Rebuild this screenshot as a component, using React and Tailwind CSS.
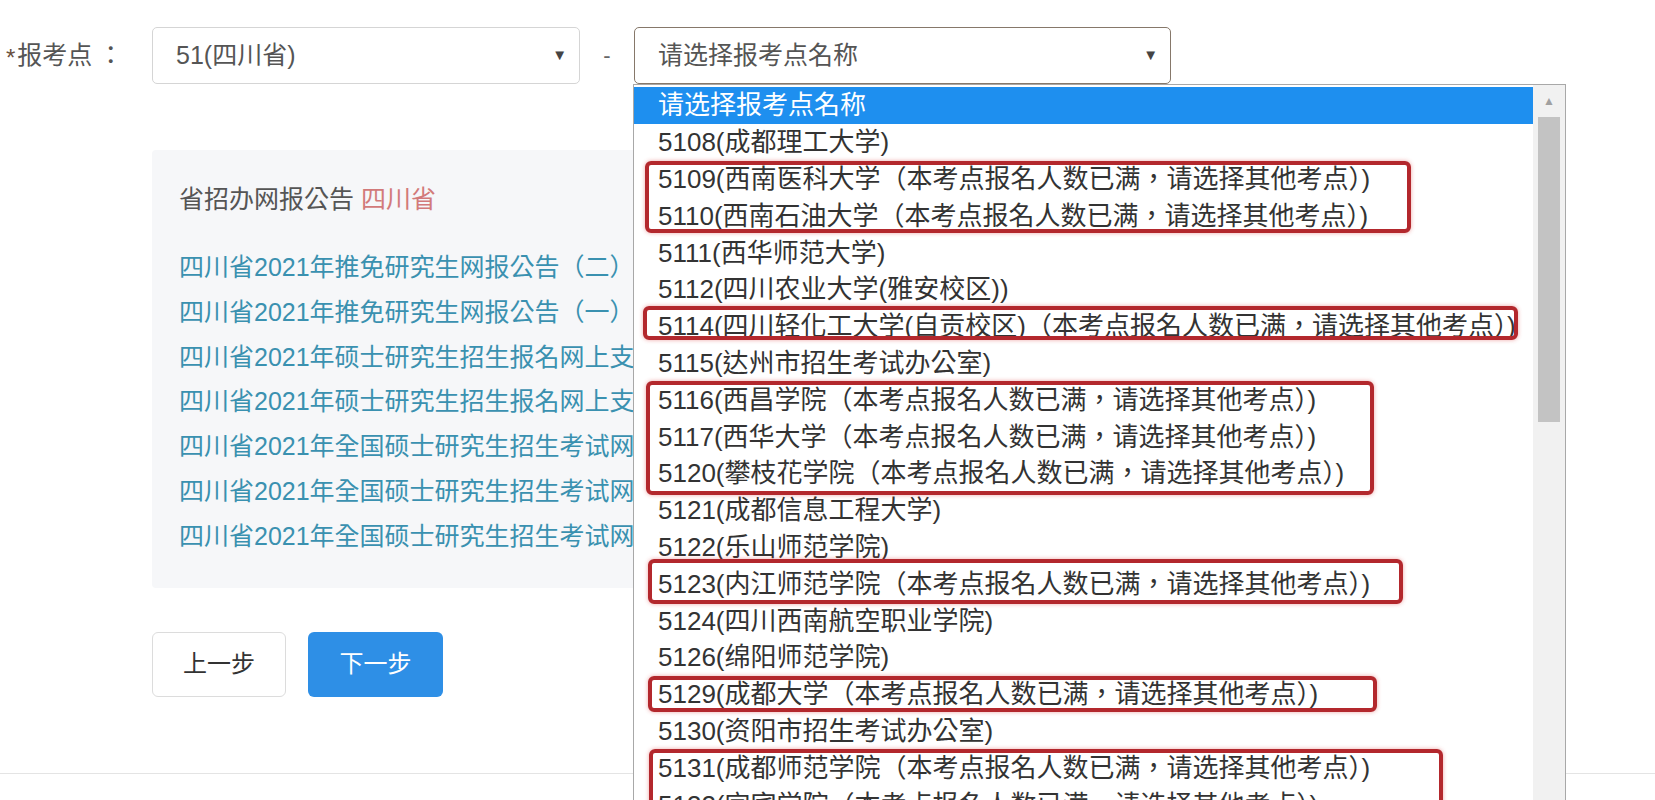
const FULL = "（本考点报名人数已满，请选择其他考点）";

const options = [
  "请选择报考点名称",
  "5108(成都理工大学)",
  `5109(西南医科大学${FULL})`,
  `5110(西南石油大学${FULL})`,
  "5111(西华师范大学)",
  "5112(四川农业大学(雅安校区))",
  `5114(四川轻化工大学(自贡校区)${FULL})`,
  "5115(达州市招生考试办公室)",
  `5116(西昌学院${FULL})`,
  `5117(西华大学${FULL})`,
  `5120(攀枝花学院${FULL})`,
  "5121(成都信息工程大学)",
  "5122(乐山师范学院)",
  `5123(内江师范学院${FULL})`,
  "5124(四川西南航空职业学院)",
  "5126(绵阳师范学院)",
  `5129(成都大学${FULL})`,
  "5130(资阳市招生考试办公室)",
  `5131(成都师范学院${FULL})`,
  `5132(宜宾学院${FULL})`,
];

const notices = [
  "四川省2021年推免研究生网报公告（二）",
  "四川省2021年推免研究生网报公告（一）",
  "四川省2021年硕士研究生招生报名网上支付公告（二）",
  "四川省2021年硕士研究生招生报名网上支付公告（一）",
  "四川省2021年全国硕士研究生招生考试网上报名公告（三）",
  "四川省2021年全国硕士研究生招生考试网上报名公告（二）",
  "四川省2021年全国硕士研究生招生考试网上报名公告（一）",
];

// red marks drawn over the list in the screenshot
const marks = [
  "left-[645px] top-[161px] w-[766px] h-[72px]",
  "left-[643px] top-[306px] w-[875px] h-[34px]",
  "left-[646px] top-[381px] w-[728px] h-[114px]",
  "left-[648px] top-[559px] w-[755px] h-[45px]",
  "left-[648px] top-[676px] w-[729px] h-[36px]",
  "left-[649px] top-[749px] w-[794px] h-[70px]",
];

function Select({ width, value, focused }) {
  return (
    <div
      className={`${width} h-[57px] flex items-center justify-between pl-[23px] pr-[12px] rounded-[5px] border bg-white text-[25px] text-[#555] ${
        focused ? "border-[#86786a]" : "border-[#d5d5d5]"
      }`}
    >
      <span>{value}</span>
      <span className="text-[15px] text-[#444]">▼</span>
    </div>
  );
}

export default function App() {
  return (
    <div
      className="relative w-[1655px] h-[800px] overflow-hidden bg-white"
      style={{ fontFamily: '"Liberation Sans", "Noto Sans CJK TC", "Noto Sans CJK SC", sans-serif' }}
    >
      <div className="pt-[27px]">
        <div className="flex items-center">
          <div className="w-[152px] pl-[6px] text-[25px] text-[#555] flex items-center">
            <span className="text-[24px] leading-none text-[#6a5040] mr-[2px] mt-[4px]">*</span>
            <span>报考点</span>
            <span className="ml-[6px]">：</span>
          </div>
          <Select width="w-[428px]" value="51(四川省)" />
          <div className="w-[54px] text-center text-[22px] text-[#666]">-</div>
          <Select width="w-[537px]" value="请选择报考点名称" focused />
        </div>

        <div className="ml-[152px] mt-[66px] w-[1000px] bg-[#f6f7f9] rounded-[4px] pt-[31px] pl-[27px] pb-[29px]">
          <div className="text-[25px] leading-[36px] text-[#555]">
            省招办网报公告 <span className="text-[#d27a7a]">四川省</span>
          </div>
          <div className="mt-[28px] flex flex-col">
            {notices.map((n) => (
              <a key={n} className="text-[25px] leading-[44.8px] text-[#3a91b0] whitespace-nowrap">
                {n}
              </a>
            ))}
          </div>
        </div>

        <div className="ml-[152px] mt-[44px] flex gap-[22px]">
          <button className="w-[134px] h-[65px] rounded-[6px] border border-[#dcdcdc] bg-white text-[24px] text-[#333]">
            上一步
          </button>
          <button className="w-[135px] h-[65px] rounded-[6px] bg-[#2e8fe6] text-[24px] text-white">
            下一步
          </button>
        </div>

        <div className="mt-[76px] h-px bg-[#e4e4e4]" />
      </div>

      {/* open dropdown list */}
      <div className="absolute left-[633px] top-[84px] w-[933px] h-[760px] z-10 flex border border-[#a8a8a8] bg-white">
        <div className="flex-1 overflow-hidden pt-[2px]">
          {options.map((o, i) => (
            <div
              key={o}
              className={`h-[36.8px] flex items-center pl-[24px] text-[26px] leading-[30px] whitespace-nowrap ${
                i === 0 ? "bg-[#1e8fef] text-white" : "text-[#333]"
              }`}
            >
              {o}
            </div>
          ))}
        </div>
        <div className="w-[32px] bg-[#f1f1f1] flex flex-col items-center pt-[10px]">
          <span className="text-[12px] leading-none text-[#a0a0a0]">▲</span>
          <div className="mt-[10px] w-[22px] h-[305px] bg-[#c3c3c3]" />
        </div>
      </div>

      {marks.map((m) => (
        <div
          key={m}
          className={`absolute z-20 ${m} rounded-[6px] border-[4px] border-[#b3282d] shadow-[0_0_4px_rgba(220,60,60,0.45)]`}
        />
      ))}
    </div>
  );
}
